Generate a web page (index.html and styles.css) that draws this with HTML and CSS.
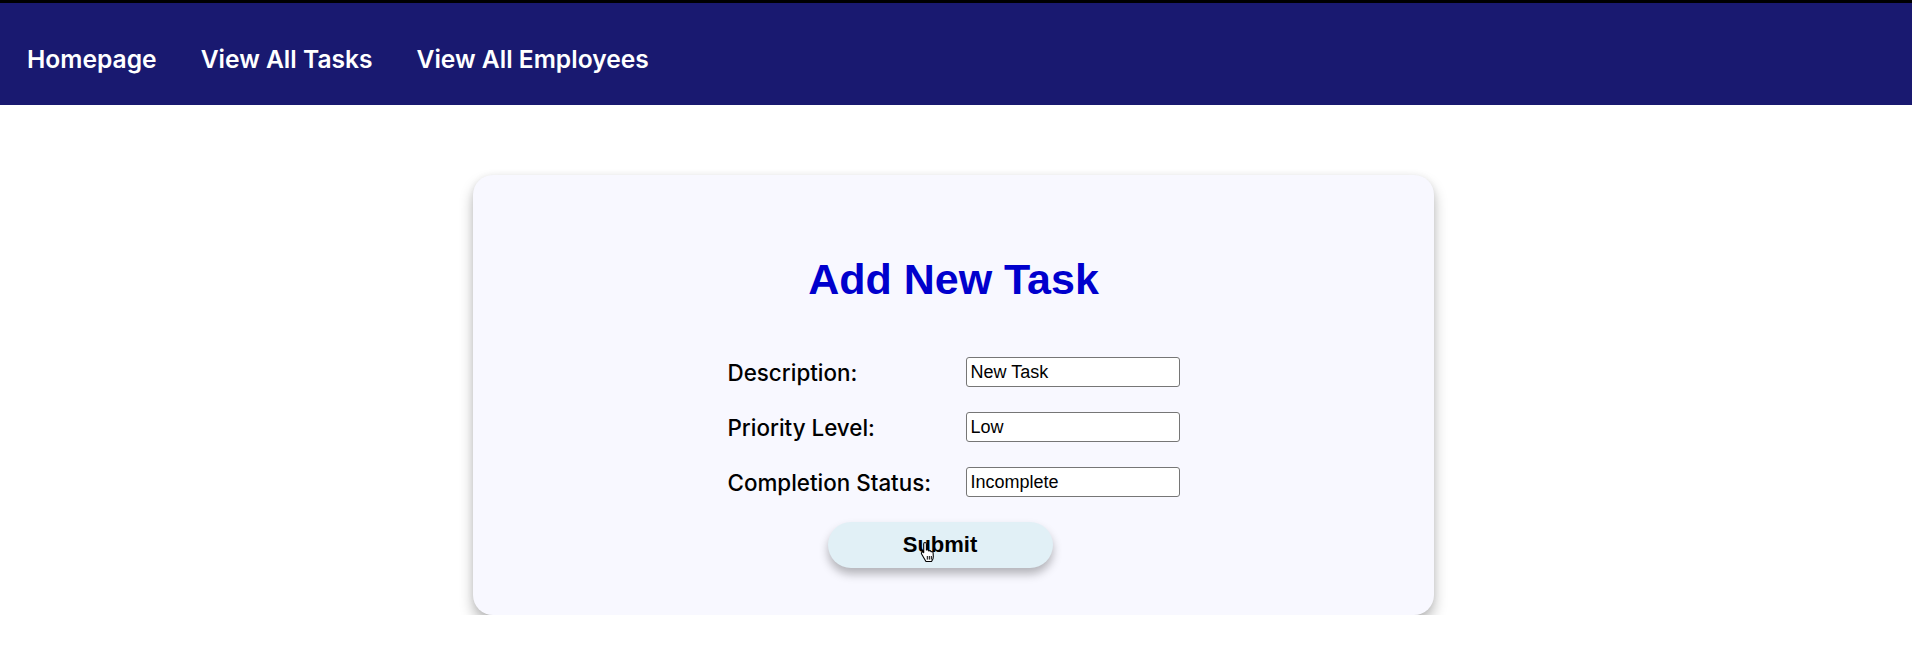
FILE: index.html
```html
<!DOCTYPE html>
<html lang="en">
<head>
<meta charset="utf-8">
<title>Add New Task</title>
<link rel="stylesheet" href="styles.css">
</head>
<body>
<nav class="topnav">
  <a class="nav-link" href="#">Homepage</a>
  <a class="nav-link" href="#">View All Tasks</a>
  <a class="nav-link" href="#">View All Employees</a>
</nav>
<main class="page">
  <section class="card">
    <h1 class="card-title">Add New Task</h1>
    <form class="task-form">
      <div class="fields">
        <label class="field-label" for="desc">Description:</label>
        <input class="field-input" id="desc" type="text" value="New Task">
        <label class="field-label" for="prio">Priority Level:</label>
        <input class="field-input" id="prio" type="text" value="Low">
        <label class="field-label" for="stat">Completion Status:</label>
        <input class="field-input" id="stat" type="text" value="Incomplete">
      </div>
      <div class="actions">
        <button class="submit-btn" type="button">Submit
          <svg class="cursor" width="16" height="22" viewBox="0 0 16 22">
            <path d="M5 1.5c.8 0 1.4.6 1.4 1.4V9l.6-.2c.7-.2 1.4.1 1.6.7l.2.4.5-.2c.7-.2 1.4.1 1.6.7l.2.4.4-.1c.8-.2 1.5.3 1.6 1.1l.2 3.6c0 1.500-.4 2.9-1.2 4.1l-.6 1H6l-1.2-2.1L1.6 13c-.4-.6-.3-1.4.3-1.8.6-.4 1.3-.3 1.8.2l-.1.1.1.1V2.9C3.7 2.1 4.3 1.5 5 1.5z" fill="#fff" stroke="#000" stroke-width="1.1" stroke-linejoin="round"/>
            <path d="M7.3 15v3.6M9.3 15v3.6M11.3 15v3.6" stroke="#000" stroke-width="1"/>
          </svg>
        </button>
      </div>
    </form>
  </section>
</main>
</body>
</html>
```

FILE: styles.css
```css
* { box-sizing: border-box; }

html, body {
  margin: 0;
  padding: 0;
  background: #ffffff;
  font-family: Inter, "Noto Sans", sans-serif;
}

.topnav {
  display: flex;
  align-items: center;
  gap: 44px;
  height: 105px;
  padding: 10px 27px 0;
  background: #191970;
  border-top: 3px solid #000;
}

.nav-link {
  color: #ffffff;
  text-decoration: none;
  font-family: Inter, sans-serif;
  font-weight: 600;
  font-size: 24.6px;
  line-height: 30px;
}

.page {
  display: flex;
  justify-content: center;
  padding-top: 70px;
}

.card {
  width: 961px;
  margin-left: -5px;
  background: #f8f8ff;
  border-radius: 20px;
  box-shadow: 0 8px 14px rgba(0, 0, 0, 0.28), 0 0 6px rgba(0, 0, 0, 0.06);
  padding: 80px 0 47px;
  display: flex;
  flex-direction: column;
  align-items: center;
}

.card-title {
  margin: 0;
  font-family: "Liberation Sans", Arial, sans-serif;
  font-weight: 700;
  font-size: 43px;
  line-height: 49px;
  color: #0000cd;
}

.task-form {
  margin-top: 53px;
  display: flex;
  flex-direction: column;
  align-items: center;
}

.fields {
  display: grid;
  grid-template-columns: 238px 214px;
  row-gap: 25px;
  align-items: center;
}

.field-label {
  font-family: Inter, sans-serif;
  font-weight: 500;
  font-size: 22.4px;
  color: #000;
}

.field-input {
  width: 214px;
  height: 30px;
  margin: 0;
  padding: 0 4px;
  border: 1px solid #767676;
  border-radius: 3px;
  background: #fff;
  font-family: "Liberation Sans", Arial, sans-serif;
  font-size: 18px;
  color: #000;
}

.actions {
  margin-top: 25px;
  display: flex;
  justify-content: center;
  width: 100%;
}

.submit-btn {
  position: relative;
  width: 225px;
  height: 46px;
  margin-right: 27px;
  border: none;
  border-radius: 23px;
  background: #e1f0f6;
  box-shadow: 0 6px 10px rgba(0, 0, 0, 0.28);
  font-family: "Liberation Sans", Arial, sans-serif;
  font-weight: 700;
  font-size: 22px;
  color: #000;
}

.cursor {
  position: absolute;
  left: 92px;
  top: 19px;
}
```
